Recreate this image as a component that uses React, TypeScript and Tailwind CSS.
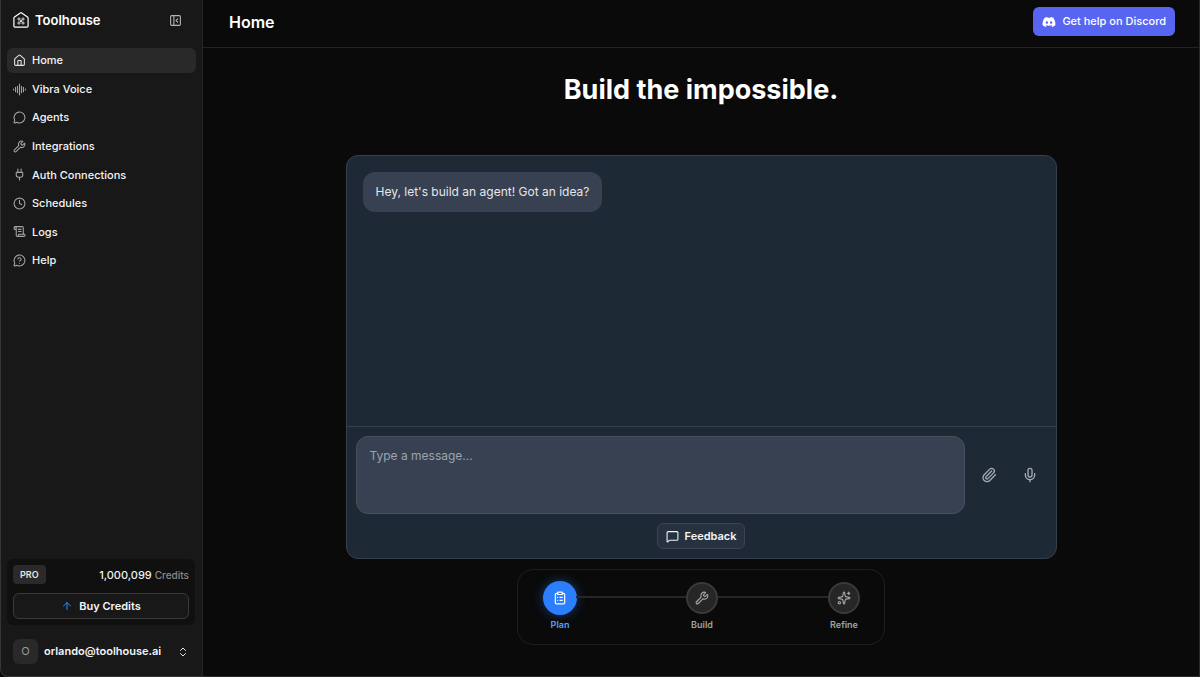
import React from 'react';
import {
  ArrowUp,
  ChevronsUpDown,
  ClipboardList,
  Clock,
  House,
  MessageCircle,
  MessageCircleQuestionMark,
  MessageSquare,
  Mic,
  PanelLeftClose,
  Paperclip,
  Plug,
  ScrollText,
  Sparkles,
  Wrench,
} from 'lucide-react';
import { FaDiscord } from 'react-icons/fa';

interface IconProps {
  size?: number;
  className?: string;
}

const Logo: React.FC<IconProps> = ({ size = 16, className }) => (
  <svg width={size} height={size} viewBox="0 0 16 16" fill="none" stroke="currentColor" className={className} aria-hidden="true">
    <path d="M.9 6.200c0-.5.2-.8.6-1.100L7.300.9c.5-.3.9-.3 1.400 0l5.800 4.200c.4.3.6.6.6 1.100V14c0 .7-.4 1.100-1.100 1.100H2C1.300 15.100.9 14.700.9 14z" strokeWidth="1.200" />
    <g strokeWidth=".8">
      <circle cx="6" cy="7" r="1.100" />
      <circle cx="10" cy="7" r="1.100" />
      <circle cx="6" cy="11" r="1.100" />
      <circle cx="10" cy="11" r="1.100" />
      <path d="M6.800 7.800l2.400 2.400M9.200 7.800l-2.400 2.400" />
    </g>
  </svg>
);

const Waveform: React.FC<IconProps> = ({ size = 12, className }) => (
  <svg width={size} height={size} viewBox="0 0 24 24" fill="none" stroke="currentColor" strokeWidth="2" strokeLinecap="round" className={className} aria-hidden="true">
    <path d="M1 11v2M4.700 8v8M8.300 6v12M12 2v20M15.700 6v12M19.300 8v8M23 11v2" />
  </svg>
);

const navItems = [
  { label: 'Home', icon: House, active: true },
  { label: 'Vibra Voice', icon: Waveform },
  { label: 'Agents', icon: MessageCircle },
  { label: 'Integrations', icon: Wrench },
  { label: 'Auth Connections', icon: Plug },
  { label: 'Schedules', icon: Clock },
  { label: 'Logs', icon: ScrollText },
  { label: 'Help', icon: MessageCircleQuestionMark },
];

const steps = [
  { label: 'Plan', icon: ClipboardList, active: true },
  { label: 'Build', icon: Wrench },
  { label: 'Refine', icon: Sparkles },
];

const Sidebar: React.FC = () => (
  <aside className="w-[203px] shrink-0 flex flex-col bg-[#181818] border-l border-r border-l-[#353535] border-r-[#262626] border-b border-b-[#353535] rounded-bl-lg px-1.5">
    <div className="flex items-center justify-between pl-1.5 pr-3.5 pt-[11px]">
      <a href="#" className="flex items-center gap-1.5 text-white">
        <Logo />
        <span className="text-[13px] leading-[18px] font-semibold">Toolhouse</span>
      </a>
      <button aria-label="Collapse sidebar" className="text-[#b4b4b4]">
        <PanelLeftClose size={13} />
      </button>
    </div>

    <nav className="mt-[19px] h-[225px] flex flex-col justify-between">
      {navItems.map(({ label, icon: Icon, active }) => (
        <a
          key={label}
          href="#"
          className={`h-[25px] px-1.5 flex items-center gap-1.5 rounded-md text-[11px] font-medium text-[#f4f4f5] ${
            active ? 'bg-[#292929]' : 'hover:bg-[#222222]'
          }`}
        >
          <Icon size={13} className={active ? 'text-[#e4e4e4]' : 'text-[#a3a3a3]'} />
          {label}
        </a>
      ))}
    </nav>

    <div className="mt-auto mr-px bg-[#101010] rounded-md p-1.5">
      <div className="flex items-center justify-between">
        <span className="bg-[#2a2a2a] text-[#e5e5e5] text-[9px] leading-[19px] font-semibold px-[7px] rounded">PRO</span>
        <p className="text-[11px] leading-4 font-medium text-[#f0f0f0]">
          1,000,099 <span className="text-[10px] text-[#8a8a8a]">Credits</span>
        </p>
      </div>
      <button className="mt-[9px] w-full h-[26px] flex items-center justify-center gap-1.5 rounded-md border border-[#3a3a3a] bg-[#181818] text-[11px] font-semibold text-[#f4f4f5]">
        <ArrowUp size={12} className="text-[#1e90ff]" />
        Buy Credits
      </button>
    </div>

    <button className="mt-3.5 mb-3 pl-1.5 pr-[7px] flex items-center text-left">
      <span className="size-[25px] rounded-md bg-[#292929] text-[#9a9a9a] text-[11px] flex items-center justify-center">O</span>
      <span className="ml-1.5 text-[11px] font-semibold text-[#f4f4f5]">orlando@toolhouse.ai</span>
      <ChevronsUpDown size={12} className="ml-auto text-[#e5e5e5]" />
    </button>
  </aside>
);

const Chat: React.FC = () => (
  <section className="w-full max-w-[711px] flex flex-col bg-[#1e2936] border border-[#36404d] rounded-xl">
    <div className="h-[270px] p-4">
      <p className="w-fit bg-[#374151] text-[#e5e7eb] text-[12px] leading-5 px-[13px] py-2.5 rounded-xl">
        Hey, let's build an agent! Got an idea?
      </p>
    </div>
    <div className="border-t border-[#36404d] p-[9px]">
      <div className="flex items-center">
        <textarea
          aria-label="Message"
          placeholder="Type a message..."
          className="flex-1 h-[78px] resize-none rounded-xl border border-[#465160] bg-[#374151] px-[13px] py-[9px] text-[12px] leading-5 text-[#e5e7eb] placeholder:text-[#9ca3af] outline-none"
        />
        <button aria-label="Attach file" className="w-[41px] ml-1 h-8 flex items-center justify-center text-[#a3abb7]">
          <Paperclip size={16} />
        </button>
        <button aria-label="Record voice" className="w-[41px] -mr-1 h-8 flex items-center justify-center text-[#a3abb7]">
          <Mic size={16} />
        </button>
      </div>
      <button className="mt-[9px] mx-auto h-[26px] px-2 flex items-center gap-1.5 rounded-md border border-[#3b4552] bg-[#273240] text-[11px] font-semibold text-[#f4f4f5]">
        <MessageSquare size={13} />
        Feedback
      </button>
    </div>
  </section>
);

const Stepper: React.FC = () => (
  <section className="mt-2.5 w-[368px] max-w-full h-[76px] rounded-2xl border border-[#1f1f1f] pl-[26px] pr-6 pt-3 flex">
    {steps.map(({ label, icon: Icon, active }, i) => (
      <React.Fragment key={label}>
        {i > 0 && <div className="flex-1 h-0.5 mt-[14px] bg-[#262626]" />}
        <div className="w-8 flex flex-col items-center">
          <button
            aria-label={label}
            className={`size-8 shrink-0 rounded-full flex items-center justify-center ${
              active
                ? 'bg-[#2b7fff] text-white ring-1 ring-[#2b7fff] shadow-[0_0_12px_rgba(43,127,255,0.5)]'
                : 'bg-[#262626] text-[#a3a3a3] border-2 border-[#3a3a3a]'
            }`}
          >
            <Icon size={14} />
          </button>
          <span className={`mt-1 text-[9px] leading-[14px] font-semibold ${active ? 'text-[#51a2ff]' : 'text-[#a3a3a3]'}`}>
            {label}
          </span>
        </div>
      </React.Fragment>
    ))}
  </section>
);

export default function App() {
  return (
    <div className="min-h-screen flex bg-[#0a0a0a] font-['Inter',sans-serif] text-white antialiased">
      <Sidebar />
      <div className="flex-1 min-w-0 flex flex-col border-r border-b border-[#2a2a2a]">
        <header className="h-12 flex items-center justify-between pl-[26px] pr-6 pb-1 border-b border-[#232323]">
          <h1 className="text-base font-semibold">Home</h1>
          <a href="#" className="h-[29px] px-[9px] flex items-center gap-1.5 rounded-md bg-[#5865f2] text-[11px] font-medium text-white">
            <FaDiscord size={14} />
            Get help on Discord
          </a>
        </header>
        <main className="flex-1 flex flex-col items-center px-6 pt-6">
          <h2 className="mb-[47px] text-[27px] leading-9 font-bold">Build the impossible.</h2>
          <Chat />
          <Stepper />
        </main>
      </div>
    </div>
  );
}
